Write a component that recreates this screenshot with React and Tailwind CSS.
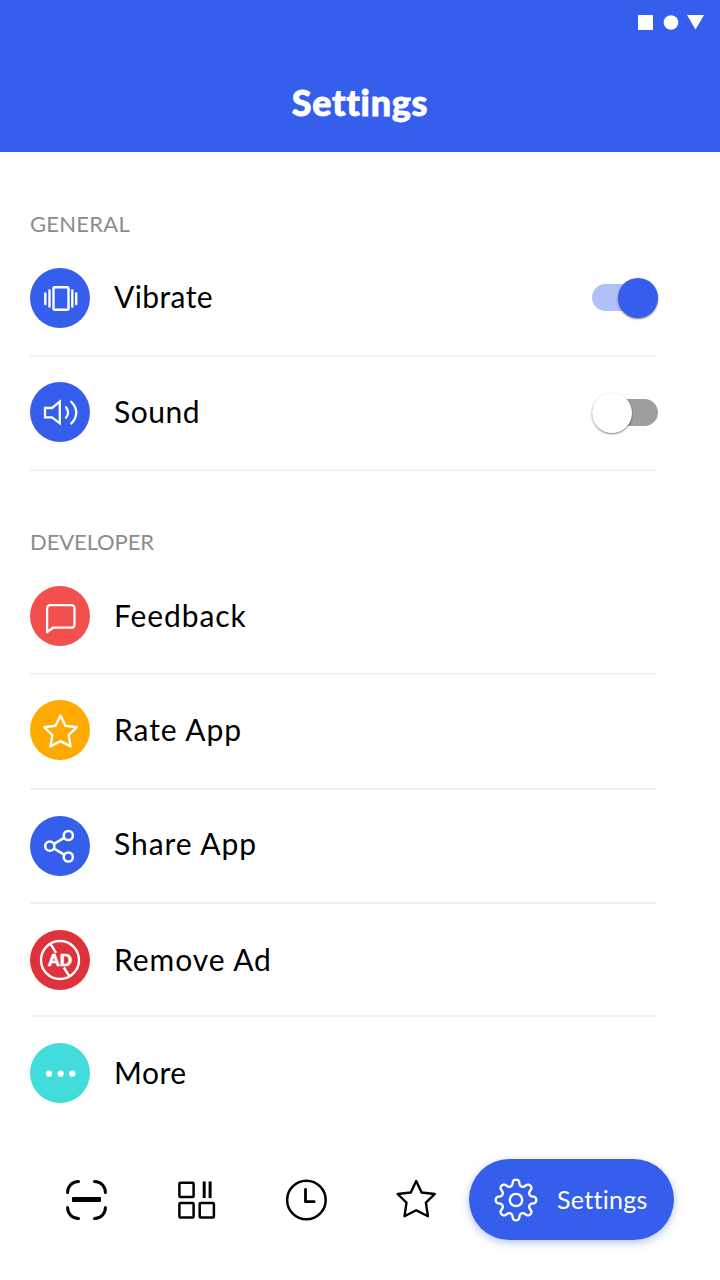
import React, { useState } from 'react';
import clsx from 'clsx';

function Icon({ size, width = 2.4, className, children }) {
  return (
    <svg
      width={size}
      height={size}
      viewBox={`0 0 ${size} ${size}`}
      fill="none"
      stroke="currentColor"
      strokeWidth={width}
      strokeLinecap="round"
      strokeLinejoin="round"
      className={clsx('block shrink-0', className)}
    >
      {children}
    </svg>
  );
}

const VibrateIcon = () => (
  <Icon size={60}>
    <rect x="23.5" y="19.2" width="15" height="22.6" rx="1.5" />
    <path d="M19.5 22.5v16M15.3 25.5v10.5M42.3 22.5v16M46.2 25.5v10.5" />
  </Icon>
);

const SoundIcon = () => (
  <Icon size={60} width={2.3}>
    <path d="M15 26h7l7.8-6.3v21.6L22 35.4h-7z" strokeLinejoin="miter" />
    <path d="M36 25.2c2.8 3.5 2.8 7 0 10.5M41.2 19.8c6.7 6.7 6.7 15 0 21.7" />
  </Icon>
);

const FeedbackIcon = () => (
  <Icon size={60} width={2.3}>
    <path d="M17.1 46V22.2a3 3 0 0 1 3-3h21.4a3 3 0 0 1 3 3v16.5a3 3 0 0 1-3 3H23z" />
  </Icon>
);

const RateIcon = () => (
  <Icon size={60} width={2.4}>
    <path d="M30.5 15.5l5 10.2 11.3 1.5-8.2 8 2 11.2-10.1-5.3-10.1 5.3 2-11.2-8.2-8 11.3-1.5z" />
  </Icon>
);

const ShareIcon = () => (
  <Icon size={60} width={2.5}>
    <circle cx="19.8" cy="30.2" r="4.6" />
    <circle cx="38.3" cy="19.5" r="4.6" />
    <circle cx="38.3" cy="41" r="4.6" />
    <path d="M24 27.8l10.2-6M24 32.6l10.2 6" />
  </Icon>
);

const RemoveAdIcon = () => (
  <Icon size={60} width={2.4}>
    <circle cx="30" cy="30" r="19" />
    <path d="M20.5 13.8L26 22.8M33.8 37.5L39.5 46.5" strokeLinecap="butt" />
    <text
      x="18.2"
      y="36"
      className="fill-white font-['Lato',sans-serif] text-[16px] font-black"
      strokeWidth="0.7"
    >
      A
    </text>
    <text
      x="29.8"
      y="36"
      className="fill-white font-['Lato',sans-serif] text-[16px] font-black"
      strokeWidth="0.7"
    >
      D
    </text>
  </Icon>
);

const MoreIcon = () => (
  <Icon size={60}>
    <g fill="currentColor" stroke="none">
      <circle cx="19" cy="30.7" r="3.1" />
      <circle cx="30.7" cy="30.7" r="3.1" />
      <circle cx="42.3" cy="30.7" r="3.1" />
    </g>
  </Icon>
);

const ScanIcon = () => (
  <Icon size={44} width={3}>
    <path d="M3.6 14.5C3.6 8.5 8 3.4 14.5 3.4M30.5 3.4c6.5 0 10.9 5.1 10.9 11.1M3.6 29.5c0 6 4.4 11.1 10.9 11.1M30.5 40.6c6.5 0 10.9-5.1 10.9-11.1" />
    <rect x="8" y="19" width="29" height="5" rx="1" fill="currentColor" stroke="none" />
  </Icon>
);

const GridIcon = () => (
  <Icon size={44} width={2.5}>
    <rect x="5.4" y="4.7" width="14.2" height="14.4" rx="1" />
    <rect x="5.4" y="25" width="14.2" height="14.6" rx="1" />
    <rect x="25.7" y="25" width="14.2" height="14.6" rx="1" />
    <path d="M30.2 3.5v16.5M36.1 3.5v16.5" strokeWidth="3" strokeLinecap="butt" />
  </Icon>
);

const ClockIcon = () => (
  <Icon size={44} width={2.5}>
    <circle cx="22.4" cy="22" r="19.3" />
    <path d="M21.5 11.5v12.2h8.6" strokeWidth="2.8" />
  </Icon>
);

const StarIcon = () => (
  <Icon size={44} width={2.4}>
    <path d="M22.2 3l5.4 11.5 13.2 1.5-8.9 8.6 2 13.6-11.7-6-11.7 6 2-13.6-8.9-8.6 13.2-1.5z" />
  </Icon>
);

// closed curve with eight rounded teeth
const gearPoints = Array.from({ length: 192 }, (_, i) => {
  const t = (i / 192) * Math.PI * 2;
  const angle = t + 0.035 * Math.sin(16 * t);
  const r = 17.4 + 2.9 * Math.cos(8 * t);
  return `${(22 + r * Math.cos(angle)).toFixed(2)},${(22 + r * Math.sin(angle)).toFixed(2)}`;
}).join(' ');

const GearIcon = () => (
  <Icon size={44} width={2.3}>
    <polygon points={gearPoints} />
    <circle cx="22" cy="22" r="6.2" />
  </Icon>
);

function Toggle({ on, onChange, label }) {
  return (
    <button
      role="switch"
      aria-checked={on}
      aria-label={label}
      onClick={onChange}
      className={clsx(
        'flex h-[27px] w-[66px] items-center rounded-full',
        on ? 'justify-end bg-[#b1c1f8]' : 'bg-[#9e9e9e]'
      )}
    >
      <span
        className={clsx(
          'size-10 shrink-0 rounded-full shadow-[0_1px_2px_rgba(0,0,0,0.5)]',
          on ? 'bg-[#355eed]' : 'bg-white'
        )}
      />
    </button>
  );
}

function Row({ icon: RowIcon, label, color, size, text, last, children }) {
  return (
    <div className={clsx('flex w-[627px] items-start', size, !last && 'border-b-2 border-[#f2f2f2]')}>
      <div className={clsx('size-[60px] shrink-0 rounded-full text-white', color)}>
        <RowIcon />
      </div>
      <span className={clsx('ml-6 flex-1 text-[30px] leading-[58px] whitespace-nowrap', text)}>{label}</span>
      {children}
    </div>
  );
}

const developerRows = [
  { label: 'Feedback', icon: FeedbackIcon, color: 'bg-[#f24f4d]', size: 'h-[115px] pt-[26px]', text: 'tracking-[0.9px]' },
  { label: 'Rate App', icon: RateIcon, color: 'bg-[#ffaa00]', size: 'h-[115px] pt-[25px]', text: 'tracking-[0.95px]' },
  { label: 'Share App', icon: ShareIcon, color: 'bg-[#355eed]', size: 'h-[114px] pt-[26px]', text: '-mt-0.5 tracking-[0.95px]' },
  { label: 'Remove Ad', icon: RemoveAdIcon, color: 'bg-[#de333c]', size: 'h-[113px] pt-[26px]', text: 'tracking-[0.95px]' },
  { label: 'More', icon: MoreIcon, color: 'bg-[#42dcdb]', size: 'h-[86px] pt-[26px]', text: 'tracking-[0.5px]', last: true },
];

export default function App() {
  const [vibrate, setVibrate] = useState(true);
  const [sound, setSound] = useState(false);

  return (
    <div className="flex h-[1280px] w-[720px] flex-col overflow-hidden bg-white font-['Lato',sans-serif] text-black">
      <header className="h-[152px] shrink-0 bg-[#355eed] text-white">
        {/* Status bar */}
        <div className="flex h-[45px] items-center justify-end pr-4">
          <svg width="66" height="15" viewBox="0 0 66 15" fill="currentColor">
            <rect width="15" height="15" />
            <circle cx="33" cy="7.5" r="7.3" />
            <path d="M49 0h17l-8.5 14.5z" />
          </svg>
        </div>
        <h1 className="pt-[33px] text-center text-[36px] leading-[48px] font-black tracking-[0.7px] [-webkit-text-stroke:0.8px_white]">
          Settings
        </h1>
      </header>

      <main className="flex-1 pl-[30px]">
        <section>
          <h2 className="h-[90px] pt-[57px] text-[22px] leading-[30px] tracking-[0.25px] text-[#8c8c8c]">GENERAL</h2>
          <Row label="Vibrate" icon={VibrateIcon} color="bg-[#355eed]" size="h-[115px] pt-[26px]" text="-mt-px tracking-[0.4px]">
            <div className="-mr-px pt-4">
              <Toggle label="Vibrate" on={vibrate} onChange={() => setVibrate(!vibrate)} />
            </div>
          </Row>
          <Row label="Sound" icon={SoundIcon} color="bg-[#355eed]" size="h-[114px] pt-[25px]" text="tracking-[0.5px]">
            <div className="-mr-px pt-[17px]">
              <Toggle label="Sound" on={sound} onChange={() => setSound(!sound)} />
            </div>
          </Row>
        </section>

        <section>
          <h2 className="h-[89px] pt-[56px] text-[22px] leading-[30px] tracking-[-0.1px] text-[#8c8c8c]">DEVELOPER</h2>
          {developerRows.map((row) => (
            <Row key={row.label} {...row} />
          ))}
        </section>
      </main>

      {/* Bottom navigation */}
      <nav className="flex h-[121px] shrink-0 items-start pl-16">
        <div className="flex h-[81px] items-center gap-[66px]">
          <button aria-label="Scan"><ScanIcon /></button>
          <button aria-label="Create"><GridIcon /></button>
          <button aria-label="History"><ClockIcon /></button>
          <button aria-label="Favorites"><StarIcon /></button>
        </div>
        <button className="ml-[31px] flex h-[81px] w-[205px] items-center rounded-full bg-[#355eed] pl-[25px] text-white shadow-[0_3px_8px_rgba(53,94,237,0.35)]">
          <GearIcon />
          <span className="-mt-0.5 ml-[19px] text-[25px] leading-[40px] tracking-[0.3px]">Settings</span>
        </button>
      </nav>
    </div>
  );
}
